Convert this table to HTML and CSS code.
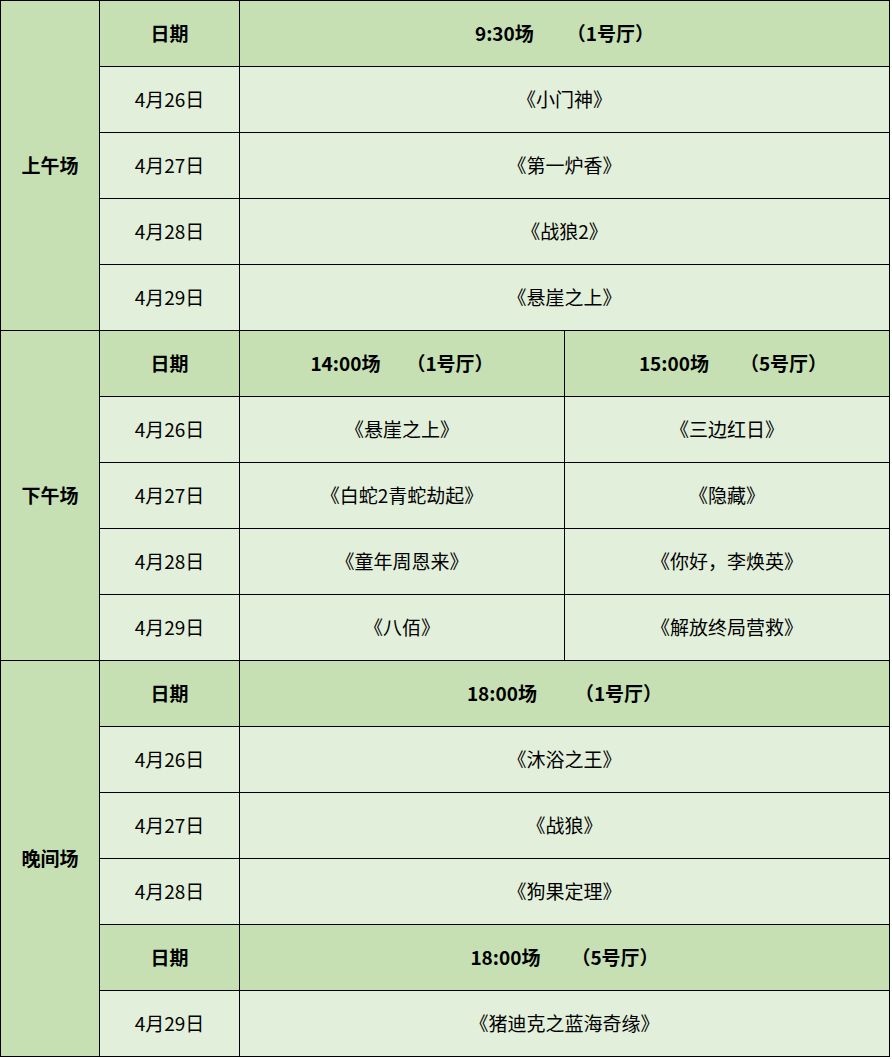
FILE: index.html
```html
<!DOCTYPE html>
<html lang="zh">
<head>
<meta charset="utf-8">
<link rel="stylesheet" href="styles.css">
</head>
<body>
<table class="sched">
  <colgroup>
    <col class="c-sess"><col class="c-date"><col class="c-film"><col class="c-film">
  </colgroup>
  <tbody>
    <tr class="hd">
      <td class="sess" rowspan="5">上午场</td>
      <td>日期</td>
      <td colspan="2"><span class="t">9:30场</span><span class="gap g-a"></span><span class="t">（1号厅）</span></td>
    </tr>
    <tr><td>4月26日</td><td colspan="2">《小门神》</td></tr>
    <tr><td>4月27日</td><td colspan="2">《第一炉香》</td></tr>
    <tr><td>4月28日</td><td colspan="2">《战狼2》</td></tr>
    <tr><td>4月29日</td><td colspan="2">《悬崖之上》</td></tr>

    <tr class="hd">
      <td class="sess" rowspan="5">下午场</td>
      <td>日期</td>
      <td><span class="t">14:00场</span><span class="gap g-b"></span><span class="t">（1号厅）</span></td>
      <td class="shift"><span class="t">15:00场</span><span class="gap g-c"></span><span class="t">（5号厅）</span></td>
    </tr>
    <tr><td>4月26日</td><td>《悬崖之上》</td><td>《三边红日》</td></tr>
    <tr><td>4月27日</td><td>《白蛇2青蛇劫起》</td><td>《隐藏》</td></tr>
    <tr><td>4月28日</td><td>《童年周恩来》</td><td>《你好，李焕英》</td></tr>
    <tr><td>4月29日</td><td>《八佰》</td><td>《解放终局营救》</td></tr>

    <tr class="hd">
      <td class="sess" rowspan="6">晚间场</td>
      <td>日期</td>
      <td colspan="2"><span class="t">18:00场</span><span class="gap g-d"></span><span class="t">（1号厅）</span></td>
    </tr>
    <tr><td>4月26日</td><td colspan="2">《沐浴之王》</td></tr>
    <tr><td>4月27日</td><td colspan="2">《战狼》</td></tr>
    <tr><td>4月28日</td><td colspan="2">《狗果定理》</td></tr>
    <tr class="hd">
      <td>日期</td>
      <td colspan="2"><span class="t">18:00场</span><span class="gap g-c"></span><span class="t">（5号厅）</span></td>
    </tr>
    <tr><td>4月29日</td><td colspan="2">《猪迪克之蓝海奇缘》</td></tr>
  </tbody>
</table>
</body>
</html>
```

FILE: styles.css
```css
html, body {
  margin: 0;
  padding: 0;
  background: #ffffff;
}

.sched {
  border-collapse: collapse;
  table-layout: fixed;
  width: 890px;
  font-family: "Noto Sans CJK SC", "Noto Sans", sans-serif;
  font-size: 19px;
  color: #000000;
}

.c-sess { width: 99px; }
.c-date { width: 140px; }
.c-film { width: 325px; }

.sched tr {
  height: 66px;
}

.sched td {
  border: 1px solid #000000;
  background: #e2efda;
  text-align: center;
  vertical-align: middle;
  padding: 0;
  line-height: 1.2;
  white-space: nowrap;
}

.sched tr.hd td {
  background: #c6e0b4;
  font-weight: bold;
}

.sched td.sess {
  background: #e2efda;
  font-weight: bold;
}

.sched tr.hd td.shift {
  padding-left: 12px;
}

.gap {
  display: inline-block;
}
.g-a { width: 33px; }
.g-b { width: 26px; }
.g-c { width: 31px; }
.g-d { width: 38px; }
```
